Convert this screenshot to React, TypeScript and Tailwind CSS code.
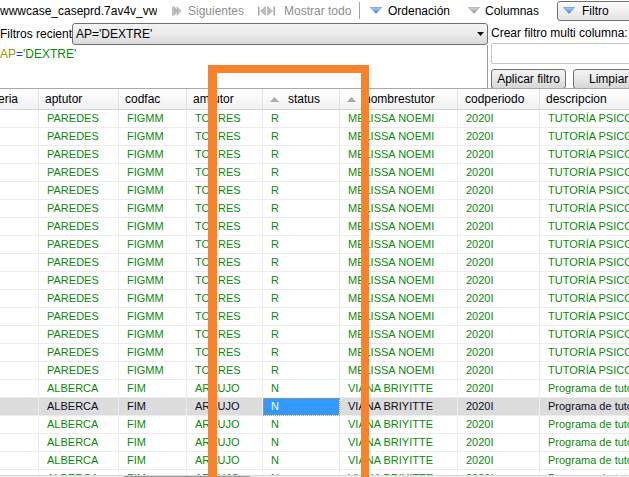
import React from "react";

type Row = {
    ap: string;
    fac: string;
    am: string;
    st: string;
    nom: string;
    per: string;
    desc: string;
};

const paredes: Row = {
    ap: "PAREDES",
    fac: "FIGMM",
    am: "TORRES",
    st: "R",
    nom: "MELISSA NOEMI",
    per: "2020I",
    desc: "TUTORÍA PSICOLÓGICA",
};

const alberca: Row = {
    ap: "ALBERCA",
    fac: "FIM",
    am: "ARAUJO",
    st: "N",
    nom: "VIANA BRIYITTE",
    per: "2020I",
    desc: "Programa de tutoría académica",
};

const rows: Row[] = [...Array(15).fill(paredes), ...Array(6).fill(alberca)];
const SELECTED = 16;

// Icons
const SkipIcon = () => (
    <svg width="9" height="10" viewBox="0 0 9 10">
        <rect x="0" y="0.5" width="1.5" height="9" fill="#b8b8b8" />
        <polygon points="2,0.5 5.5,5 2,9.5" fill="#b8b8b8" stroke="#a0a0a0" strokeWidth="0.5" />
        <polygon points="5,0.5 9,5 5,9.5" fill="#c4c4c4" stroke="#a0a0a0" strokeWidth="0.5" />
    </svg>
);

const ShowAllIcon = () => (
    <svg width="17" height="10" viewBox="0 0 17 10">
        <rect x="0" y="0.5" width="1.5" height="9" fill="#a8a8a8" />
        <polygon points="7.5,0.5 2.5,5 7.5,9.5" fill="#bdbdbd" stroke="#9c9c9c" strokeWidth="0.5" />
        <polygon points="9.5,0.5 14.5,5 9.5,9.5" fill="#bdbdbd" stroke="#9c9c9c" strokeWidth="0.5" />
        <rect x="15.5" y="0.5" width="1.5" height="9" fill="#a8a8a8" />
    </svg>
);

const DownTriangle = ({ blue }: { blue?: boolean }) => (
    <svg width="12" height="7" viewBox="0 0 12 7" className="shrink-0">
        <defs>
            <linearGradient id="triBlue" x1="0" y1="0" x2="0" y2="1">
                <stop offset="0" stopColor="#a9d3f7" />
                <stop offset="1" stopColor="#2f7fd6" />
            </linearGradient>
            <linearGradient id="triGray" x1="0" y1="0" x2="0" y2="1">
                <stop offset="0" stopColor="#d6d6d6" />
                <stop offset="1" stopColor="#8f8f8f" />
            </linearGradient>
        </defs>
        <polygon
            points="0.5,0.5 11.5,0.5 6,6.5"
            fill={blue ? "url(#triBlue)" : "url(#triGray)"}
            stroke={blue ? "#4a86c8" : "#9a9a9a"}
            strokeWidth="0.6"
        />
    </svg>
);

const SortUp = () => (
    <svg width="9" height="5" viewBox="0 0 9 5" className="shrink-0">
        <polygon points="0,5 4.5,0 9,5" fill="#a9a9a9" />
    </svg>
);

const ComboArrow = () => (
    <svg width="7" height="4" viewBox="0 0 7 4">
        <polygon points="0,0 7,0 3.5,4" fill="#111" />
    </svg>
);

const headerCls =
    "h-[20px] flex items-center border-r border-[#e3e3e3] bg-linear-to-b from-white to-[#f1f1f1] whitespace-nowrap overflow-hidden";
const cellCls =
    "h-[18px] flex items-center px-2 border-r border-b border-[#ececec] whitespace-nowrap overflow-hidden";
const btnCls =
    "h-[20px] flex shrink-0 items-center border border-[#707070] rounded-[3px] bg-linear-to-b from-[#f4f4f4] via-[#e8e8e8] to-[#d6d6d6] whitespace-nowrap";

const App = () => {
    return (
        <div className="relative h-[477px] w-[629px] overflow-hidden bg-white font-['Liberation_Sans',Arial,sans-serif] text-[12px] text-black">
            {/* Toolbar */}
            <div className="flex h-[21px] items-center overflow-hidden whitespace-nowrap">
                <div className="w-[157px] shrink-0 overflow-hidden">
                    wwwcase_caseprd.7av4v_vw_st_tutorias
                </div>
                <div className="ml-[15px] flex w-[86px] shrink-0 items-center gap-[7px] text-[#8e8e8e]">
                    <SkipIcon />
                    Siguientes
                </div>
                <div className="flex w-[101px] shrink-0 items-center gap-[9px] text-[#8e8e8e]">
                    <ShowAllIcon />
                    Mostrar todo
                </div>
                <div className="h-[17px] w-px shrink-0 bg-[#a5a5a5]" />
                <div className="ml-[10px] flex w-[98px] shrink-0 items-center gap-[6px]">
                    <DownTriangle blue />
                    Ordenación
                </div>
                <div className="flex w-[89px] shrink-0 items-center gap-[5px]">
                    <DownTriangle />
                    Columnas
                </div>
                <div className="flex h-[20px] w-[100px] shrink-0 items-center gap-[7px] rounded-[3px] border border-[#707070] bg-linear-to-b from-[#fbfbfb] to-[#e4e4e4] pl-[5px]">
                    <DownTriangle blue />
                    Filtro
                </div>
            </div>

            {/* Filter panel */}
            <div className="flex h-[68px] border-b border-[#a8a8a8]">
                <div className="flex w-[488px] shrink-0 flex-col">
                    <div className="mt-[2px] flex h-[22px] items-center">
                        <div className="w-[72px] shrink-0 overflow-hidden whitespace-nowrap">
                            Filtros recientes
                        </div>
                        <div className="flex h-[22px] flex-1 items-center justify-between rounded-[3px] border border-[#707070] bg-linear-to-b from-[#f3f3f3] via-[#ebebeb] to-[#d9d9d9] pl-[3px] pr-[3px]">
                            <span>AP='DEXTRE'</span>
                            <ComboArrow />
                        </div>
                    </div>
                    <div className="flex-1 border-r border-[#9c9c9c]">
                        <span className="text-[#9a9400]">AP</span>
                        <span className="text-[#1a3cff]">=</span>
                        <span className="text-[#0a8a0a]">'DEXTRE'</span>
                    </div>
                </div>
                <div className="flex min-w-0 flex-1 flex-col overflow-hidden pl-[3px]">
                    <div className="mt-[3px] whitespace-nowrap">
                        Crear filtro multi columna:
                    </div>
                    <div className="mt-[1px] h-[21px] w-[160px] shrink-0 rounded-[2px] border border-[#c4c6cc] bg-white" />
                    <div className="mt-[5px] flex gap-[7px]">
                        <div className={`${btnCls} w-[75px] justify-center`}>
                            Aplicar filtro
                        </div>
                        <div className={`${btnCls} w-[80px] pl-[15px]`}>
                            Limpiar
                        </div>
                    </div>
                </div>
            </div>

            {/* Grid header */}
            <div className="grid grid-cols-[39px_80px_68px_76px_77px_118px_82px_1fr] border-b border-[#d6d6d6]">
                <div className={`${headerCls}`}>
                    <span className="-ml-[22px]">materia</span>
                </div>
                <div className={`${headerCls} pl-[6px]`}>aptutor</div>
                <div className={`${headerCls} pl-[6px]`}>codfac</div>
                <div className={`${headerCls} pl-[6px]`}>amtutor</div>
                <div className={`${headerCls} gap-[9px] pl-[7px]`}>
                    <SortUp />
                    status
                </div>
                <div className={`${headerCls} gap-[8px] pl-[7px]`}>
                    <SortUp />
                    nombrestutor
                </div>
                <div className={`${headerCls} pl-[7px]`}>codperiodo</div>
                <div className={`${headerCls} border-r-0 pl-[6px]`}>descripcion</div>
            </div>

            {/* Grid rows */}
            <div className="h-[365px] overflow-hidden text-[11px]">
                {rows.map((r, i) => {
                    const sel = i === SELECTED;
                    const rowCls = sel
                        ? "bg-[#dcdcdc] text-[#0c0c1c]"
                        : "bg-white text-[#0a8a0a]";
                    return (
                        <div
                            key={i}
                            className={`grid grid-cols-[39px_80px_68px_76px_77px_118px_82px_1fr] ${rowCls}`}
                        >
                            <div className={cellCls} />
                            <div className={cellCls}>{r.ap}</div>
                            <div className={cellCls}>{r.fac}</div>
                            <div className={cellCls}>{r.am}</div>
                            <div
                                className={
                                    sel
                                        ? `${cellCls} bg-[#3399ff] text-white outline-1 outline-dotted outline-[#d99a3a] -outline-offset-1`
                                        : cellCls
                                }
                            >
                                {r.st}
                            </div>
                            <div className={cellCls}>{r.nom}</div>
                            <div className={cellCls}>{r.per}</div>
                            <div className={`${cellCls} border-r-0`}>{r.desc}</div>
                        </div>
                    );
                })}
            </div>

            {/* Horizontal scrollbar */}
            <div className="flex h-[17px] border-t border-[#dadada] bg-[#ebebeb]">
                <div className="ml-[123px] h-full w-[128px] rounded-[2px] border border-[#979797] bg-linear-to-b from-[#f5f5f5] to-[#dedede]" />
            </div>

            {/* Annotation */}
            <div className="absolute left-[208px] top-[65px] h-[420px] w-[161px] border-l-[9px] border-r-[8px] border-t-[8px] border-b-0 border-[#f9822a]" />
        </div>
    );
};

export default App;
